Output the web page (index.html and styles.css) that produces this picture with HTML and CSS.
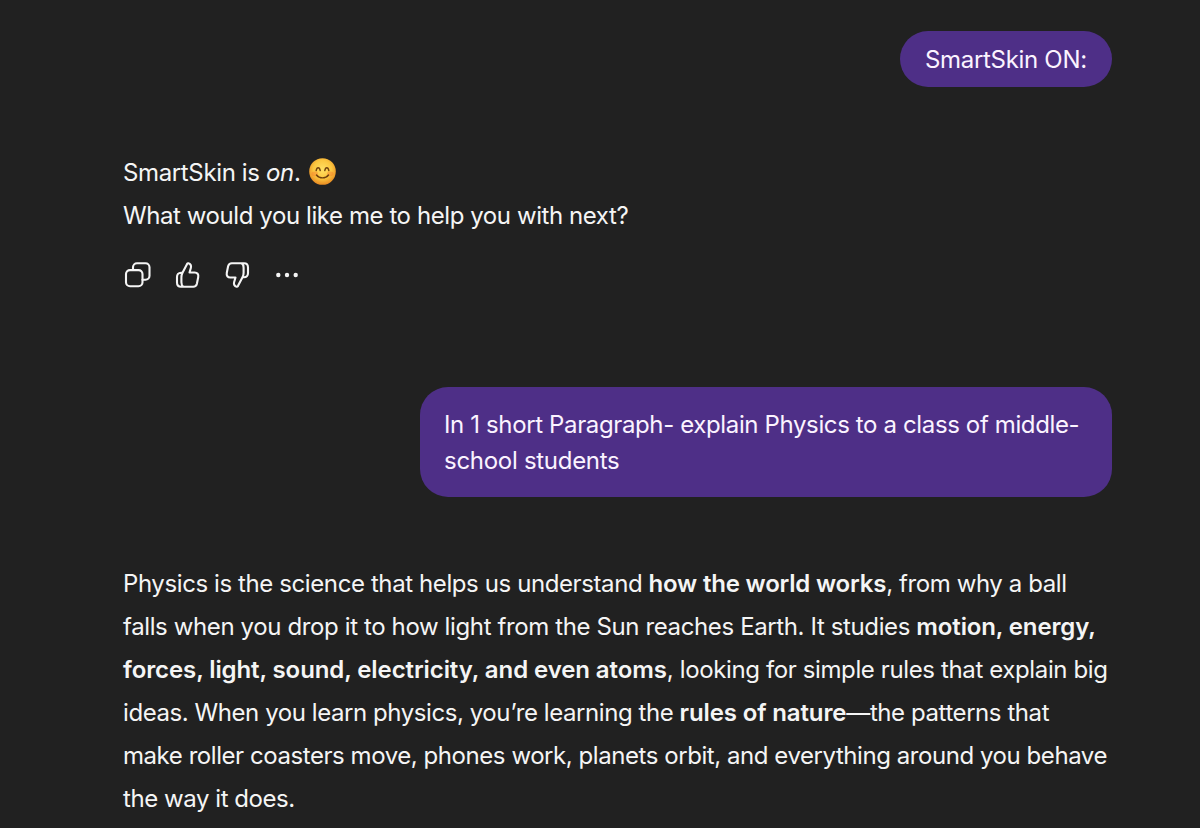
FILE: index.html
```html
<!DOCTYPE html>
<html lang="en">
<head>
    <meta charset="UTF-8">
    <meta name="viewport" content="width=device-width, initial-scale=1.0">
    <title>SmartSkin</title>
    <link rel="stylesheet" href="styles.css">
</head>
<body>
    <main class="chat">
        <div class="bubble short"><span class="t1">SmartSkin ON:</span></div>

        <div class="answer first">
            <span class="t2">SmartSkin is <em>on</em>.</span>
            <svg class="emoji" viewBox="0 0 26 26">
                <defs>
                    <radialGradient id="face" cx="50%" cy="42%" r="58%">
                        <stop offset="0" stop-color="#ffdf63"/>
                        <stop offset="0.6" stop-color="#fbc63f"/>
                        <stop offset="1" stop-color="#e88b22"/>
                    </radialGradient>
                </defs>
                <circle cx="13" cy="13" r="12.8" fill="url(#face)"/>
                <ellipse cx="5.5" cy="15.2" rx="3.2" ry="2.3" fill="#f4752e" opacity="0.4"/>
                <ellipse cx="20.5" cy="15.2" rx="3.2" ry="2.3" fill="#f4752e" opacity="0.4"/>
                <path d="M6.9 12.1c.7-3.6 3.2-3.6 3.9 0M15.2 12.1c.7-3.6 3.2-3.6 3.9 0M7.2 16.4c2.8 3.7 8.8 3.7 11.6 0" fill="none" stroke="#70410e" stroke-width="1.35" stroke-linecap="round"/>
            </svg>
            <br>
            <span class="t3">What would you like me to help you with next?</span>
        </div>

        <div class="actions">
            <svg viewBox="0 0 28 28">
                <rect x="3" y="9.1" width="16.5" height="16.2" rx="4"/>
                <path d="M10 9V6.2a4 4 0 0 1 4-4h8.500a4 4 0 0 1 4 4v8.500a4 4 0 0 1-4 4h-3"/>
            </svg>
            <svg viewBox="0 0 28 28">
                <path id="thumb" d="M9.500 11.700H8c-2.600 0-4 1.700-4 4.300v5.500c0 2.600 1.500 4.200 4 4.200h12.200c2 0 3.200-1 3.700-3l1.300-6.500c.6-2.900-.9-4.700-3.500-4.700h-5.200l1.400-4.800c.6-2.200-.5-3.900-2.500-4.400-.6-.15-1 .1-1.300.6L9.500 11.700c-.8 1.500-1.100 2.700-1.100 4.600v4.900c0 2.200.5 3.600 2 4.500"/>
            </svg>
            <svg viewBox="0 0 28 28">
                <use href="#thumb" transform="translate(1 0) rotate(180 14 14)"/>
            </svg>
            <svg viewBox="0 0 28 28" class="dots">
                <circle cx="5.3" cy="14" r="2.2"/>
                <circle cx="14" cy="14" r="2.2"/>
                <circle cx="22.7" cy="14" r="2.2"/>
            </svg>
        </div>

        <div class="bubble long">
            <span class="t4">In 1 short Paragraph- explain Physics to a class of middle-</span><br>
            <span class="t5">school students</span>
        </div>

        <div class="answer second">
            <span class="p1">Physics is the science that helps us understand <b>how the world works</b>, from why a ball</span><br>
            <span class="p2">falls when you drop it to how light from the Sun reaches Earth. It studies <b>motion, energy,</b></span><br>
            <span class="p3"><b>forces, light, sound, electricity, and even atoms</b>, looking for simple rules that explain big</span><br>
            <span class="p4">ideas. When you learn physics, you’re learning the <b>rules of nature</b>—the patterns that</span><br>
            <span class="p5">make roller coasters move, phones work, planets orbit, and everything around you behave</span><br>
            <span class="p6">the way it does.</span>
        </div>
    </main>
</body>
</html>
```
FILE: styles.css
```css
body {
    margin: 0;
    background-color: #212121;
    color: #f5f5f5;
    font-family: Inter, "Liberation Sans", sans-serif;
    font-size: 24px;
    overflow: hidden;
}

.chat {
    box-sizing: border-box;
    width: 1200px;
    height: 828px;
    padding: 31px 88px 0 123px;
    display: flex;
    flex-direction: column;
    overflow: hidden;
    white-space: nowrap;
}

/* User messages */
.bubble {
    box-sizing: border-box;
    align-self: flex-end;
    flex-shrink: 0;
    background-color: #4e2f87;
    color: #fbf3ff;
    border-radius: 28px;
    padding: 20px 24px;
    line-height: 36px;
}

.short {
    width: 212px;
    height: 56px;
    padding: 11px 25px 9px;
}

.long {
    width: 692px;
    height: 110px;
    margin-top: 98px;
}

/* Assistant messages */
.answer {
    flex-shrink: 0;
    line-height: 43px;
}

.answer b {
    font-weight: 600;
    letter-spacing: -0.13px;
}

.first {
    margin-top: 64px;
}

.second {
    margin-top: 65px;
}

/* Tracking per line */
.t1 { letter-spacing: -0.31px; }
.t2 { letter-spacing: -0.36px; }
.t3 { letter-spacing: -0.42px; }
.t4 { letter-spacing: -0.37px; }
.t5 { letter-spacing: -0.29px; }
.p1 { letter-spacing: -0.4px; }
.p2 { letter-spacing: -0.38px; }
.p3 { letter-spacing: -0.38px; }
.p4 { letter-spacing: -0.43px; }
.p5 { letter-spacing: -0.44px; }
.p6 { letter-spacing: -0.44px; }

.answer .p1 b { letter-spacing: -0.2px; }
.answer .p3 b { letter-spacing: -0.09px; }

.emoji {
    width: 27px;
    height: 27px;
    margin-left: 2px;
    vertical-align: -4px;
}

.actions {
    display: flex;
    gap: 22px;
    margin-top: 24px;
    flex-shrink: 0;
}

.actions svg {
    width: 28px;
    height: 28px;
    fill: none;
    stroke: #f5f5f5;
    stroke-width: 2.1;
    stroke-linecap: round;
    stroke-linejoin: round;
}

.actions .dots {
    fill: #f5f5f5;
    stroke: none;
}
```
